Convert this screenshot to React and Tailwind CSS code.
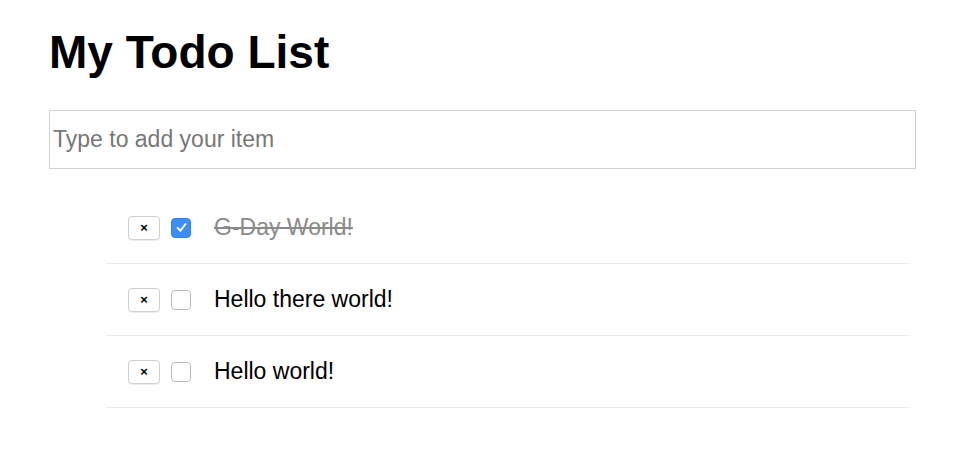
import React, { useState } from 'react';

const initialTodos = [
  { id: 1, text: 'G-Day World!', done: true },
  { id: 2, text: 'Hello there world!', done: false },
  { id: 3, text: 'Hello world!', done: false },
];

const Checkbox = ({ checked, onChange }) => (
  <button
    onClick={onChange}
    className={
      checked
        ? 'w-[20px] h-[20px] rounded-[4px] bg-[#3d8ff5] border border-[#3382ea] flex items-center justify-center'
        : 'w-[20px] h-[20px] rounded-[4px] bg-white border border-[#b9b9b9] flex items-center justify-center'
    }
  >
    {checked && (
      <svg width="13" height="13" viewBox="0 0 12 12" fill="none">
        <path d="M2.4 6.4 L5 9 L9.7 2.8" stroke="white" strokeWidth="1.8" strokeLinecap="round" strokeLinejoin="round" />
      </svg>
    )}
  </button>
);

const TodoItem = ({ todo, onToggle, onRemove }) => (
  <li className="flex items-center h-[72px] pl-[22px] border-b border-[#ebebeb]">
    <button
      onClick={onRemove}
      className="w-[32px] h-[24px] bg-white border border-[#cfcfcf] rounded-[4px] shadow-[0_1px_1px_rgba(0,0,0,0.08)] flex items-center justify-center text-[13px] font-bold leading-none text-black"
    >
      ×
    </button>
    <div className="ml-[11px]">
      <Checkbox checked={todo.done} onChange={onToggle} />
    </div>
    <span
      className={
        todo.done
          ? 'ml-[23px] text-[23px] text-[#8a8a8a] line-through'
          : 'ml-[23px] text-[23px] text-black'
      }
    >
      {todo.text}
    </span>
  </li>
);

export default function App() {
  const [todos, setTodos] = useState(initialTodos);
  const [value, setValue] = useState('');

  const addTodo = (e) => {
    if (e.key === 'Enter' && value.trim()) {
      setTodos([{ id: Date.now(), text: value, done: false }, ...todos]);
      setValue('');
    }
  };

  return (
    <div className="w-[960px] h-[460px] bg-white font-['Liberation_Sans',Arial,sans-serif] pl-[49px] pr-[44px] pt-[24px]">
      <h1 className="text-[46px] font-bold leading-none text-black h-[62px] pt-[5px]">My Todo List</h1>
      <input
        value={value}
        onChange={(e) => setValue(e.target.value)}
        onKeyDown={addTodo}
        placeholder="Type to add your item"
        className="mt-[24px] w-full h-[59px] border border-[#d2d2d2] px-[3px] text-[23px] text-black placeholder:text-[#777] outline-none"
      />
      <ul className="mt-[23px] ml-[57px] mr-[5px]">
        {todos.map((t) => (
          <TodoItem
            key={t.id}
            todo={t}
            onToggle={() => setTodos(todos.map((x) => (x.id === t.id ? { ...x, done: !x.done } : x)))}
            onRemove={() => setTodos(todos.filter((x) => x.id !== t.id))}
          />
        ))}
      </ul>
    </div>
  );
}
